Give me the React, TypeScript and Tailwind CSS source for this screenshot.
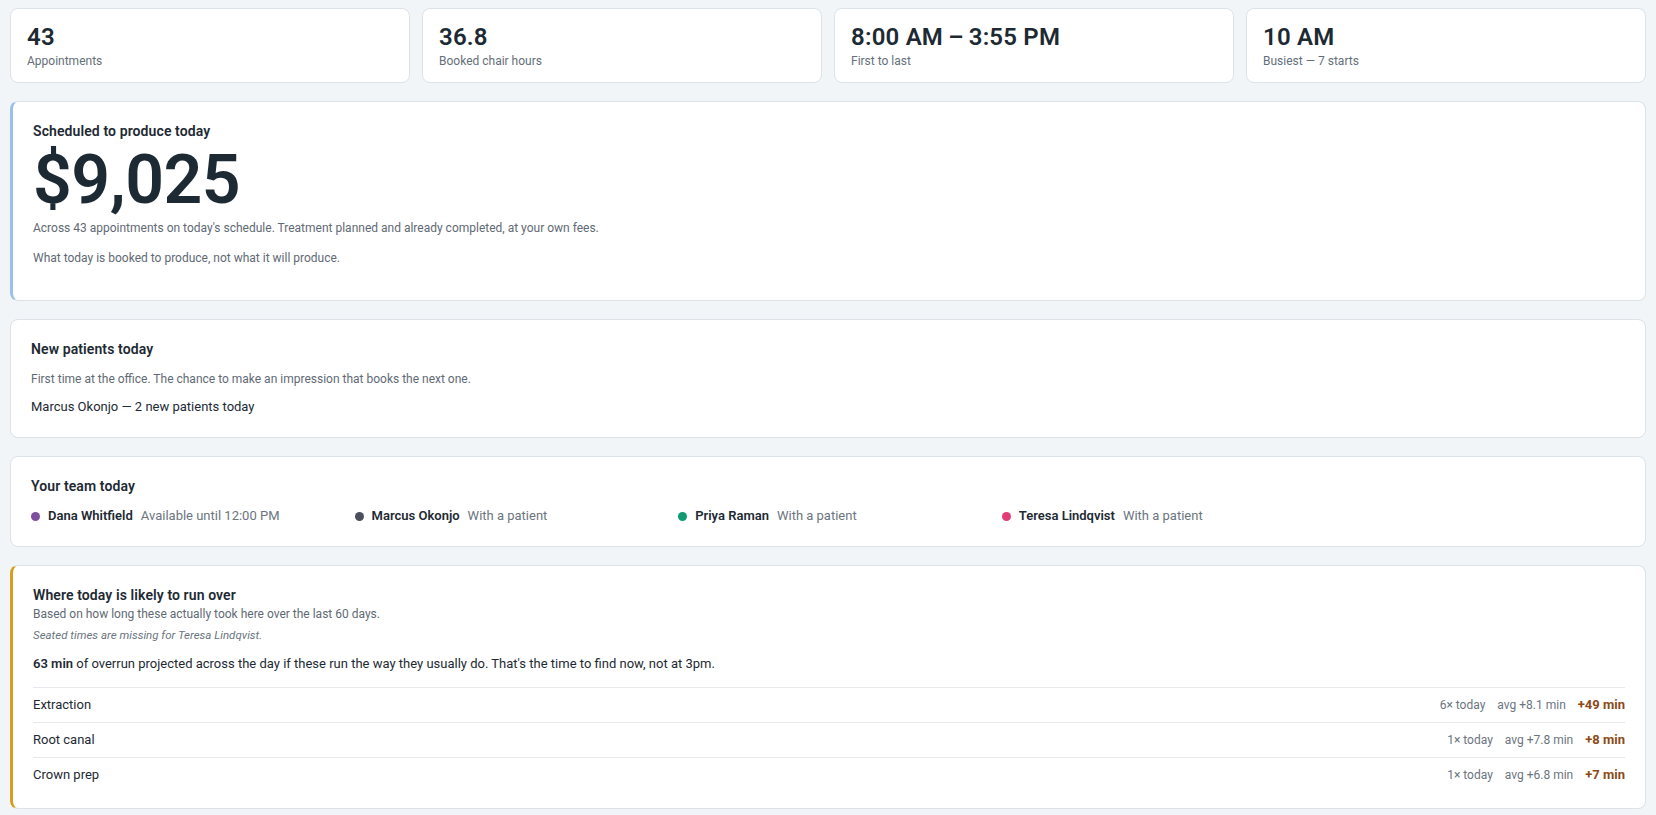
import React from 'react';

const stats = [
  { value: '43', label: 'Appointments' },
  { value: '36.8', label: 'Booked chair hours' },
  { value: '8:00 AM\u2009\u2013\u20093:55 PM', label: 'First to last' },
  { value: '10 AM', label: 'Busiest \u2014 7 starts' },
];

const team = [
  { name: 'Dana Whitfield', status: 'Available until 12:00 PM', dot: 'bg-[#7d4f9e]' },
  { name: 'Marcus Okonjo', status: 'With a patient', dot: 'bg-[#4b4f5c]' },
  { name: 'Priya Raman', status: 'With a patient', dot: 'bg-[#0f9b6f]' },
  { name: 'Teresa Lindqvist', status: 'With a patient', dot: 'bg-[#e33d73]' },
];

const overruns = [
  { name: 'Extraction', count: '6× today', avg: 'avg +8.1 min', total: '+49 min' },
  { name: 'Root canal', count: '1× today', avg: 'avg +7.8 min', total: '+8 min' },
  { name: 'Crown prep', count: '1× today', avg: 'avg +6.8 min', total: '+7 min' },
];

const App: React.FC = () => {
  return (
    <div className="min-h-screen bg-[#f1f5f8] px-2.5 pt-2 pb-2 font-['Roboto','Liberation_Sans',sans-serif] text-[#1d2a33]">
      <div className="flex flex-col gap-[18px]">
        {/* stat tiles */}
        <div className="grid grid-cols-4 gap-3">
          {stats.map(s => (
            <div key={s.label} className="bg-white border border-[#dce3e8] rounded-lg px-4 pt-3 pb-[13px]">
              <div className="text-2xl leading-8 font-semibold tracking-[0.2px]">{s.value}</div>
              <div className="text-xs leading-4 text-[#646f7a]">{s.label}</div>
            </div>
          ))}
        </div>

        {/* production */}
        <div className="bg-white border border-[#dce3e8] border-l-[3px] border-l-[#9cc0ea] rounded-lg px-5 pt-[19px] pb-[34px]">
          <div className="text-sm leading-5 font-semibold tracking-[0.1px]">Scheduled to produce today</div>
          <div className="mt-[5px] text-[68px] leading-none font-semibold tracking-[-0.5px]">$9,025</div>
          <p className="mt-1.5 text-xs leading-4 text-[#5f6a75]">
            Across 43 appointments on today's schedule. Treatment planned and already completed, at your own fees.
          </p>
          <p className="mt-3.5 text-xs leading-4 text-[#5f6a75]">
            What today is booked to produce, not what it will produce.
          </p>
        </div>

        {/* new patients */}
        <div className="bg-white border border-[#dce3e8] rounded-lg px-5 pt-[19px] pb-5">
          <div className="text-sm leading-5 font-semibold tracking-[0.1px]">New patients today</div>
          <p className="mt-3 text-xs leading-4 text-[#5f6a75]">
            First time at the office. The chance to make an impression that books the next one.
          </p>
          <div className="mt-2.5 text-[13px] leading-5">Marcus Okonjo — 2 new patients today</div>
        </div>

        {/* team */}
        <div className="bg-white border border-[#dce3e8] rounded-lg px-5 pt-[19px] pb-5">
          <div className="text-sm leading-5 font-semibold tracking-[0.1px]">Your team today</div>
          <div className="mt-2.5 grid grid-cols-5 gap-x-6">
            {team.map(m => (
              <div key={m.name} className="flex items-center text-[13px] leading-5 whitespace-nowrap">
                <span className={`w-[9px] h-[9px] rounded-full ${m.dot}`} />
                <span className="ml-2 font-semibold">{m.name}</span>
                <span className="ml-2 text-[#6b7580]">{m.status}</span>
              </div>
            ))}
          </div>
        </div>

        {/* overrun */}
        <div className="bg-white border border-[#dce3e8] border-l-[3px] border-l-[#d79d1c] rounded-lg px-5 pt-[19px] pb-4">
          <div className="text-sm leading-5 font-semibold tracking-[0.1px]">Where today is likely to run over</div>
          <p className="mt-px text-xs leading-4 text-[#5f6a75]">Based on how long these actually took here over the last 60 days.</p>
          <p className="mt-[5px] text-[11.5px] leading-4 italic text-[#6b7580]">Seated times are missing for Teresa Lindqvist.</p>
          <p className="mt-[11px] text-[13px] leading-5">
            <span className="font-semibold">63 min</span> of overrun projected across the day if these run the way they usually do. That's the time to find now, not at 3pm.
          </p>
          <div className="mt-[13px]">
            {overruns.map(r => (
              <div key={r.name} className="flex items-center justify-between h-[35px] border-t border-[#e6eaee]">
                <span className="text-[13px] text-[#1d2a33]">{r.name}</span>
                <div className="flex items-center text-xs text-[#6b7580]">
                  <span>{r.count}</span>
                  <span className="ml-3">{r.avg}</span>
                  <span className="ml-3 text-[13px] font-bold text-[#8c4a16]">{r.total}</span>
                </div>
              </div>
            ))}
          </div>
        </div>
      </div>
    </div>
  );
};

export default App;
